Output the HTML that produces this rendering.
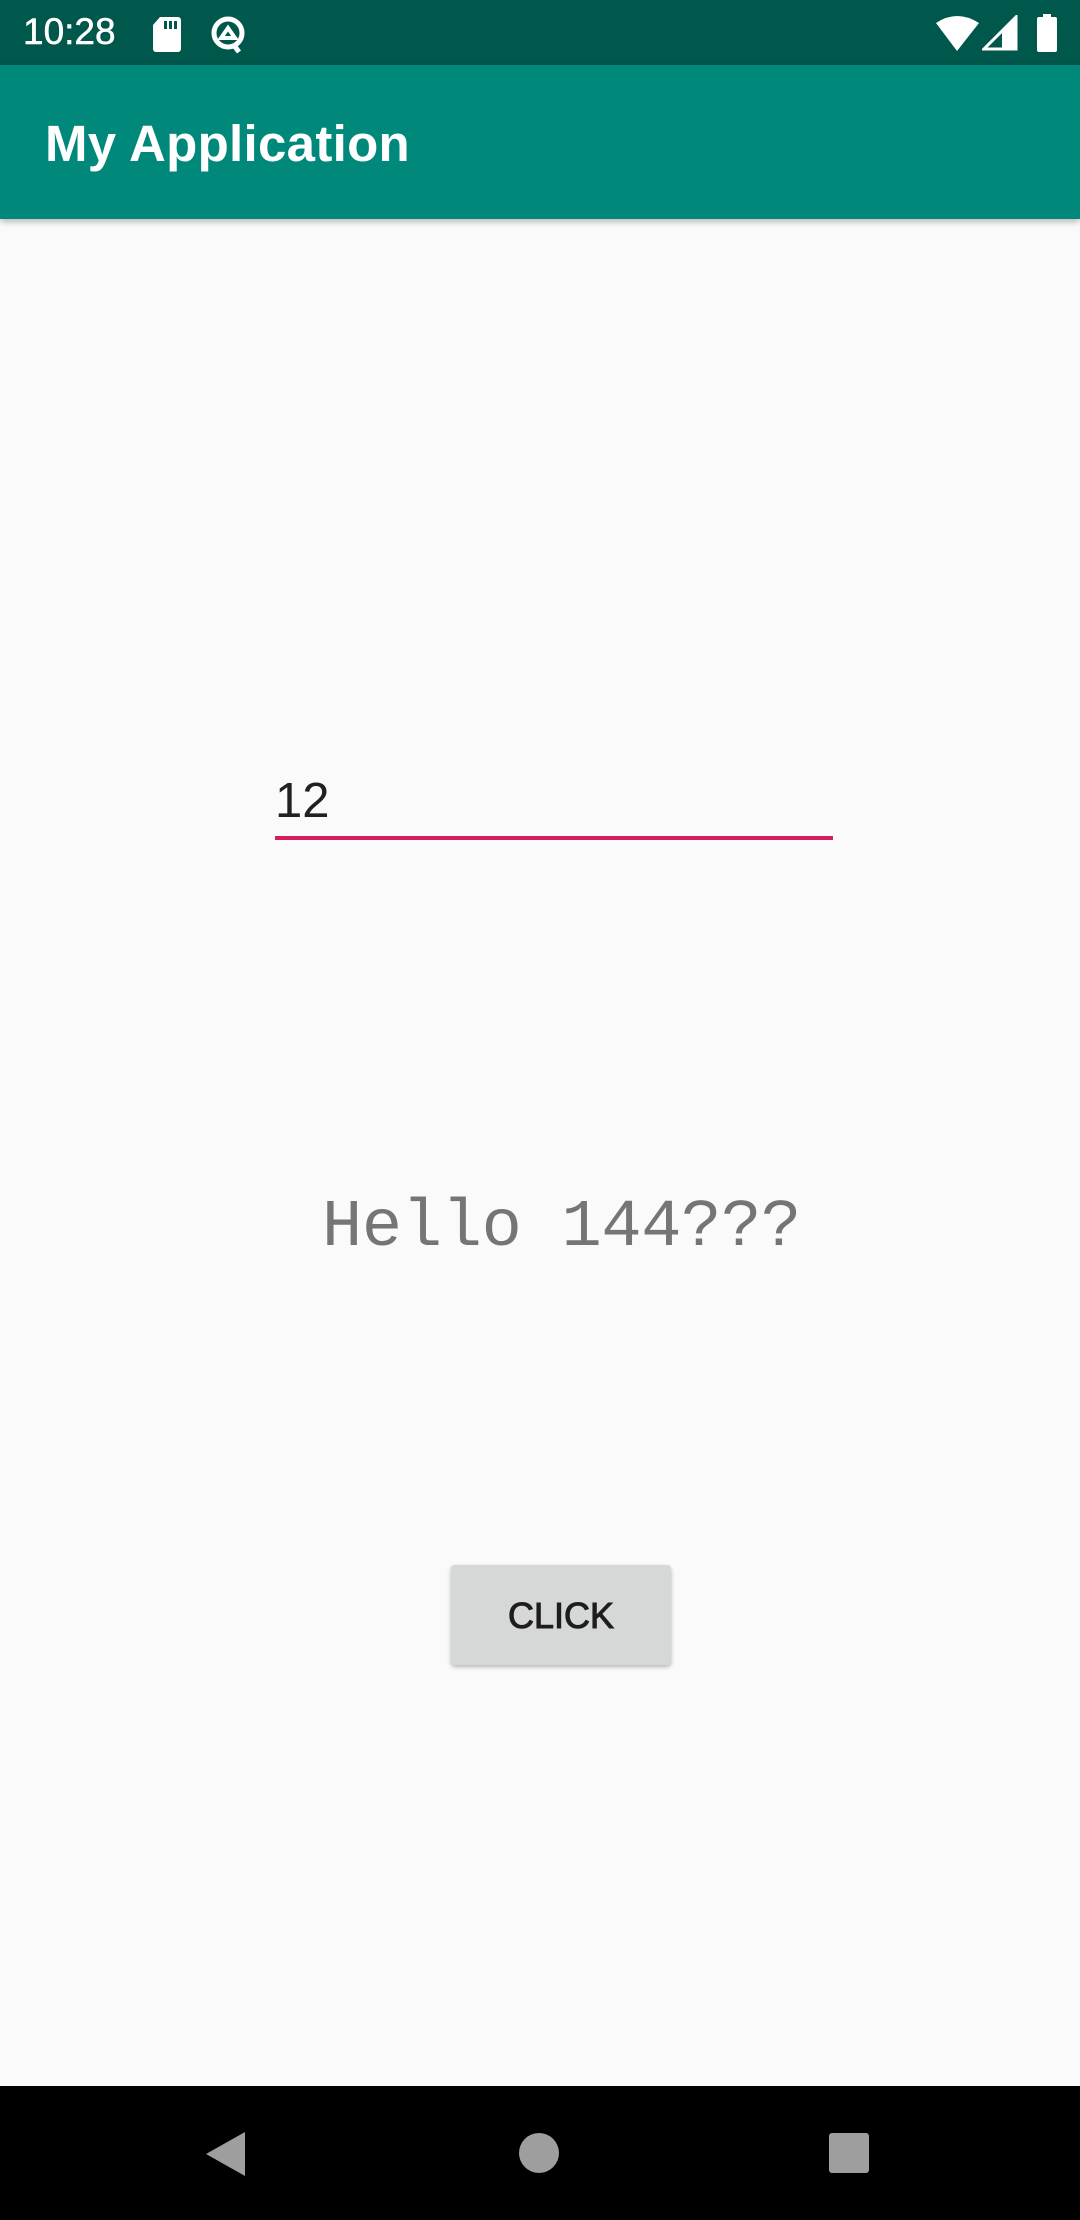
<!DOCTYPE html>
<html><head><meta charset="utf-8"><style>
*{margin:0;padding:0;box-sizing:border-box}
body{width:1080px;height:2220px;background:#FAFAFA;position:relative;overflow:hidden;font-family:"Liberation Sans",sans-serif}
.sb{position:absolute;left:0;top:0;width:1080px;height:65px;background:#00574B}
.ab{position:absolute;left:0;top:65px;width:1080px;height:154px;background:#00897B;box-shadow:0 3px 6px rgba(0,0,0,.25)}
.abs{position:absolute}
</style></head><body>
<div class="sb">
<div class="abs" style="left:23px;top:12px;color:#fff;font-size:37px;line-height:40px;-webkit-text-stroke:0.5px #fff">10:28</div>
<svg class="abs" style="left:150px;top:15px" width="36" height="38" viewBox="0 0 36 38"><path d="M10 2h18a3 3 0 0 1 3 3v29a3 3 0 0 1-3 3H6a3 3 0 0 1-3-3V10z" fill="#fff"/><rect x="14" y="6" width="3" height="8" fill="#00574B"/><rect x="19" y="6" width="3" height="8" fill="#00574B"/><rect x="24" y="6" width="3" height="8" fill="#00574B"/></svg>
<svg class="abs" style="left:207px;top:14px" width="42" height="40" viewBox="0 0 42 40"><circle cx="21" cy="19" r="14" fill="none" stroke="#fff" stroke-width="5"/><path d="M14 24l7-10 7 10z" fill="none" stroke="#fff" stroke-width="4"/><path d="M26 30l6 8" stroke="#fff" stroke-width="5"/></svg>
<svg class="abs" style="left:935px;top:15px" width="45" height="36" viewBox="0 0 45 36"><path d="M1 8Q22-6 44 8L22 36z" fill="#fff"/></svg>
<svg class="abs" style="left:982px;top:15px" width="36" height="36" viewBox="0 0 36 36"><path d="M34 2V34H2z" fill="none" stroke="#fff" stroke-width="3"/><path d="M34 2V34H20V18z" fill="#fff"/></svg>
<svg class="abs" style="left:1036px;top:14px" width="22" height="38" viewBox="0 0 22 38"><rect x="7" y="0" width="8" height="4" fill="#fff"/><rect x="1" y="3" width="20" height="35" rx="2" fill="#fff"/></svg>
</div>
<div class="ab"><div class="abs" style="left:45px;top:49px;color:#fff;font-size:51px;font-weight:bold;line-height:60px;letter-spacing:0.3px">My Application</div></div>
<div class="abs" style="left:275px;top:773px;font-size:49px;line-height:56px;color:#212121">12</div>
<div class="abs" style="left:275px;top:836px;width:558px;height:4px;background:#D81B60"></div>
<div class="abs" style="left:322px;top:1188px;font-family:'Liberation Mono',monospace;font-size:67px;line-height:80px;color:#757575;letter-spacing:-0.3px">Hello 144???</div>
<div class="abs" style="left:451px;top:1565px;width:220px;height:100px;background:#D6D7D7;border-radius:4px;box-shadow:0 2px 4px rgba(0,0,0,.28)"></div>
<div class="abs" style="left:451px;top:1596px;width:220px;text-align:center;font-size:36px;line-height:40px;color:#1d1d1d;-webkit-text-stroke:1px #1d1d1d">CLICK</div>
<div class="abs" style="left:0;top:2086px;width:1080px;height:134px;background:#000">
<svg class="abs" style="left:203px;top:44px" width="44" height="48" viewBox="0 0 44 48"><path d="M42 2V46L3 24z" fill="#9e9e9e"/></svg>
<div class="abs" style="left:519px;top:47px;width:40px;height:40px;border-radius:50%;background:#9e9e9e"></div>
<div class="abs" style="left:829px;top:47px;width:40px;height:40px;border-radius:3px;background:#9e9e9e"></div>
</div>
</body></html>
